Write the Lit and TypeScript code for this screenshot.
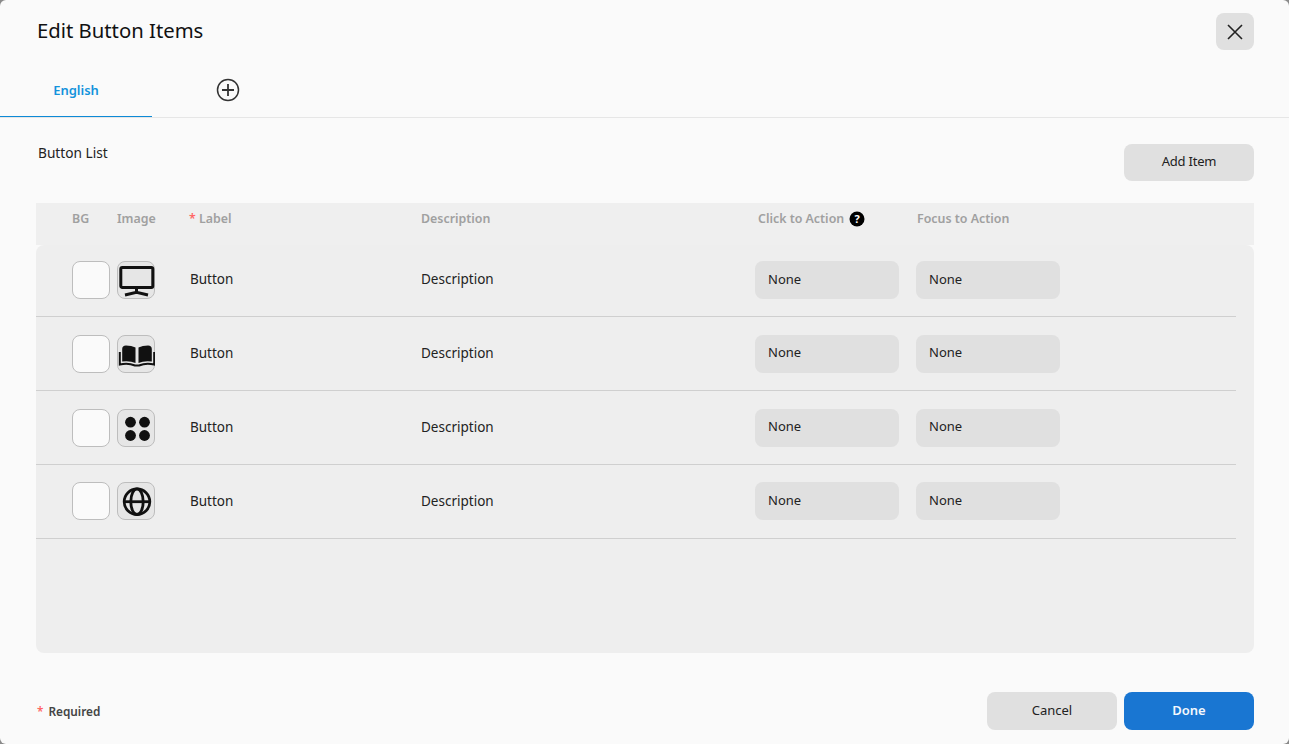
import { LitElement, html, css, svg } from "lit";
import { customElement } from "lit/decorators.js";

const icons = [
  svg`<rect x="3.800" y="6.500" width="32" height="20" rx="1.500" fill="none" stroke="#111" stroke-width="3"/><path d="M19.500 27v5M8 34 19.500 31.300 31 34" fill="none" stroke="#111" stroke-width="3"/>`,
  svg`<path d="M5.200 14 Q5.200 10.500 9 10.500 Q14.500 10.500 18.500 12.500 V28 Q13 25.500 5.200 26.500 Z M34.800 14 Q34.800 10.500 31 10.500 Q25.500 10.500 21.500 12.500 V28 Q27 25.500 34.800 26.500 Z" fill="#111"/><path d="M2.800 17 V29.500 Q11 27.500 18 30.500 H22 Q29 27.500 37.200 29.500 V17" fill="none" stroke="#111" stroke-width="2"/>`,
  svg`<circle cx="13.500" cy="13.200" r="5.400" fill="#111"/><circle cx="27.500" cy="13.200" r="5.400" fill="#111"/><circle cx="13.500" cy="26.500" r="5.400" fill="#111"/><circle cx="27.500" cy="26.500" r="5.400" fill="#111"/>`,
  svg`<g fill="none" stroke="#111" stroke-width="2.800"><circle cx="20" cy="19.700" r="12.800"/><ellipse cx="20" cy="19.700" rx="6.200" ry="12.800"/><path d="M7 19.700h26"/></g>`,
];

@customElement("app-root")
export class AppRoot extends LitElement {
  static styles = css`
    :host {
      display: block;
      height: 744px;
      background: #8a8a8a;
      font-family: "Noto Sans", "Open Sans", sans-serif;
      font-size: 13.5px;
      color: #222;
    }
    .dialog {
      height: 744px;
      box-sizing: border-box;
      background: #fafafa;
      border-radius: 6px;
      display: flex;
      flex-direction: column;
    }
    button {
      font: inherit;
      font-size: 13px;
      border: 0;
      padding: 0 0 2px;
      background: #e0e0e0;
      color: #222;
      border-radius: 8px;
      display: flex;
      align-items: center;
      justify-content: center;
    }
    .head {
      height: 63px;
      box-sizing: border-box;
      padding: 13px 35px 0 37px;
      display: flex;
      justify-content: space-between;
      align-items: flex-start;
    }
    h1 {
      margin: 0;
      font-size: 20.3px;
      font-weight: 400;
      line-height: 34px;
      color: #111;
    }
    .close {
      width: 38px;
      height: 37px;
      padding: 0;
    }
    .tabs {
      height: 55px;
      box-sizing: border-box;
      border-bottom: 1px solid #e6e6e6;
      display: flex;
    }
    .tab {
      width: 152px;
      height: 54px;
      box-sizing: border-box;
      border-bottom: 1px solid #0d8ad6;
      color: #1393dc;
      font-weight: 600;
      font-size: 13px;
      display: flex;
      align-items: center;
      justify-content: center;
    }
    .plus {
      width: 152px;
      height: 54px;
      display: flex;
      align-items: center;
      justify-content: center;
    }
    .content {
      padding: 0 35px 0 36px;
      flex: 1;
      display: flex;
      flex-direction: column;
    }
    .listbar {
      display: flex;
      justify-content: space-between;
      align-items: flex-start;
      padding-top: 26px;
      height: 85px;
      box-sizing: border-box;
    }
    .listbar span {
      margin-left: 2px;
      line-height: 18px;
      font-size: 13.7px;
    }
    .add {
      width: 130px;
      height: 37px;
      padding-bottom: 4px;
      letter-spacing: -0.2px;
    }
    .grid {
      display: grid;
      grid-template-columns: 36px 38px 7px 38px 35px 231px 334px 161px 1fr;
      align-items: center;
    }
    .cols {
      height: 42px;
      box-sizing: border-box;
      background: #efefef;
      padding-bottom: 12px;
      color: #a0a0a0;
      font-size: 12.4px;
      font-weight: 600;
    }
    .c-bg { grid-column: 2; }
    .c-img { grid-column: 4; }
    .c-lab { grid-column: 6; margin-left: -1px; }
    .c-desc { grid-column: 7; }
    .c-click { grid-column: 8; margin-left: 3px; display: flex; align-items: center; gap: 5px; }
    .c-click svg { margin-top: 2px; }
    .c-focus { grid-column: 9; margin-left: 1px; }
    .star { color: #f66; }
    .list {
      height: 408px;
      background: #eeeeee;
      border-radius: 8px;
      padding-right: 18px;
    }
    .row {
      height: 74px;
      box-sizing: border-box;
      border-bottom: 1px solid #cfcfcf;
      padding-top: 1px;
    }
    .row:first-child {
      height: 72px;
      padding-top: 0;
      padding-bottom: 1px;
    }
    .swatch, .img {
      width: 38px;
      height: 38px;
      box-sizing: border-box;
      border: 1px solid #bdbdbd;
      border-radius: 8px;
      background: #fafafa;
    }
    .swatch { grid-column: 2; }
    .img {
      grid-column: 4;
      background: #e6e6e6;
      position: relative;
    }
    .img svg {
      position: absolute;
      left: -1px;
      top: -1px;
    }
    .row:last-child .swatch,
    .row:last-child .img,
    .row:last-child .sel {
      margin-bottom: 2px;
    }
    .cell-lab { grid-column: 6; padding-bottom: 2px; }
    .cell-desc { grid-column: 7; padding-bottom: 2px; }
    .row:first-child .cell-lab,
    .row:first-child .cell-desc {
      padding-bottom: 3px;
    }
    .sel {
      width: 144px;
      height: 38px;
      box-sizing: border-box;
      background: #e0e0e0;
      border-radius: 8px;
      padding: 0 0 5px 13px;
      display: flex;
      align-items: center;
      font-size: 13px;
    }
    .row:first-child .sel,
    .row:last-child .sel {
      padding-bottom: 3px;
    }
    .s1 { grid-column: 8; }
    .s2 { grid-column: 9; }
    .foot {
      height: 91px;
      box-sizing: border-box;
      padding: 39px 35px 0 37px;
      display: flex;
      justify-content: space-between;
      align-items: flex-start;
    }
    .req {
      font-size: 11.8px;
      font-weight: 600;
      color: #444;
      line-height: 38px;
    }
    .req .star { margin-right: 5px; }
    .actions {
      display: flex;
      gap: 7px;
    }
    .actions button {
      width: 130px;
      height: 38px;
    }
    .done {
      background: #1976d2;
      color: #f4f8fd;
      font-weight: 600;
    }
  `;

  render() {
    return html`
      <div class="dialog">
        <div class="head">
          <h1>Edit Button Items</h1>
          <button class="close" aria-label="Close">
            <svg width="18" height="18" viewBox="0 0 18 18"><path d="M2 2l14 14M16 2 2 16" stroke="#222" stroke-width="1.600" fill="none"/></svg>
          </button>
        </div>
        <div class="tabs">
          <div class="tab">English</div>
          <div class="plus">
            <svg width="24" height="24" viewBox="0 0 24 24"><circle cx="12" cy="12" r="10.500" fill="none" stroke="#333" stroke-width="1.500"/><path d="M12 6v12M6 12h12" stroke="#333" stroke-width="1.800"/></svg>
          </div>
        </div>
        <div class="content">
          <div class="listbar">
            <span>Button List</span>
            <button class="add">Add Item</button>
          </div>
          <div class="grid cols">
            <div class="c-bg">BG</div>
            <div class="c-img">Image</div>
            <div class="c-lab"><span class="star">*</span> Label</div>
            <div class="c-desc">Description</div>
            <div class="c-click">Click to Action
              <svg width="16" height="16" viewBox="0 0 16 16"><circle cx="8" cy="8" r="7.500" fill="#000"/><text x="8" y="12" text-anchor="middle" font-size="11" font-weight="700" fill="#fff" font-family="Noto Sans">?</text></svg>
            </div>
            <div class="c-focus">Focus to Action</div>
          </div>
          <div class="list">
            ${icons.map(
              (icon) => html`
                <div class="grid row">
                  <div class="swatch"></div>
                  <div class="img"><svg width="38" height="38" viewBox="0 0 38 38">${icon}</svg></div>
                  <div class="cell-lab">Button</div>
                  <div class="cell-desc">Description</div>
                  <div class="sel s1">None</div>
                  <div class="sel s2">None</div>
                </div>
              `
            )}
          </div>
        </div>
        <div class="foot">
          <div class="req"><span class="star">*</span>Required</div>
          <div class="actions">
            <button>Cancel</button>
            <button class="done">Done</button>
          </div>
        </div>
      </div>
    `;
  }
}
